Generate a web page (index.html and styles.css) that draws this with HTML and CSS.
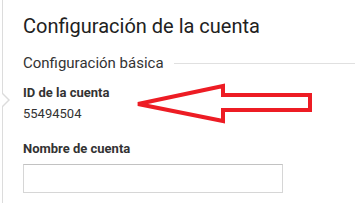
FILE: index.html
```html
<!DOCTYPE html>
<html lang="es">
<head>
    <meta charset="UTF-8">
    <meta name="viewport" content="width=device-width, initial-scale=1.0">
    <title>Configuración de la cuenta</title>
    <link rel="stylesheet" href="styles.css">
</head>
<body>
    <div class="panel">
        <span class="notch"></span>
        <h1>Configuración de la cuenta</h1>
        <div class="seccion">
            <h2>Configuración básica</h2>
            <span class="linea"></span>
        </div>
        <div class="campo">
            <label>ID de la cuenta</label>
            <div class="valor">55494504</div>
        </div>
        <div class="campo nombre">
            <label for="nombre">Nombre de cuenta</label>
            <input type="text" id="nombre" name="nombre">
        </div>

        <!-- flecha roja encima -->
        <svg class="flecha" width="355" height="203" viewBox="0 0 355 203">
            <polygon points="138,104 223,86 223,95 310,95 310,110 223,110 223,121" fill="none" stroke="#ed1c24" stroke-width="4" stroke-linejoin="miter"/>
        </svg>
    </div>
</body>
</html>
```

FILE: styles.css
```css
body {
    font-family: Roboto, "Liberation Sans", Arial, sans-serif;
    background-color: #fff;
    margin: 0;
    padding: 0;
    overflow: hidden;
}

.panel {
    position: relative;
    margin-left: 2px;
    border-left: 1px solid #dcdcdc;
    height: 203px;
    padding: 14px 0 0 20px;
    box-sizing: border-box;
}

.notch {
    position: absolute;
    left: -1px;
    top: 92px;
    width: 0;
    height: 0;
    border-top: 8px solid transparent;
    border-bottom: 8px solid transparent;
    border-left: 8px solid #dcdcdc;
}

.notch::after {
    content: "";
    position: absolute;
    left: -9px;
    top: -7px;
    border-top: 7px solid transparent;
    border-bottom: 7px solid transparent;
    border-left: 7px solid #fff;
}

h1 {
    font-size: 20px;
    font-weight: 400;
    line-height: 24px;
    color: #212121;
    margin: 0;
}

.seccion {
    display: flex;
    align-items: center;
    gap: 10px;
    margin-top: 15px;
}

h2 {
    font-size: 15px;
    font-weight: 400;
    line-height: 20px;
    color: #333;
    margin: 0;
    white-space: nowrap;
}

.linea {
    flex: 1;
    border-top: 1px solid #e0e0e0;
}

.campo {
    margin-top: 12px;
}

.campo label {
    display: block;
    font-size: 13px;
    font-weight: 700;
    line-height: 16px;
    color: #333;
}

.valor {
    font-size: 13px;
    line-height: 16px;
    color: #333;
    margin-top: 5px;
}

.nombre {
    margin-top: 19px;
}

.nombre input {
    display: block;
    width: 260px;
    height: 29px;
    box-sizing: border-box;
    margin-top: 7px;
    border: 1px solid #d6d6d6;
    border-top-color: #c2c2c2;
    outline: none;
}

.flecha {
    position: absolute;
    left: -3px;
    top: 0;
}
```
